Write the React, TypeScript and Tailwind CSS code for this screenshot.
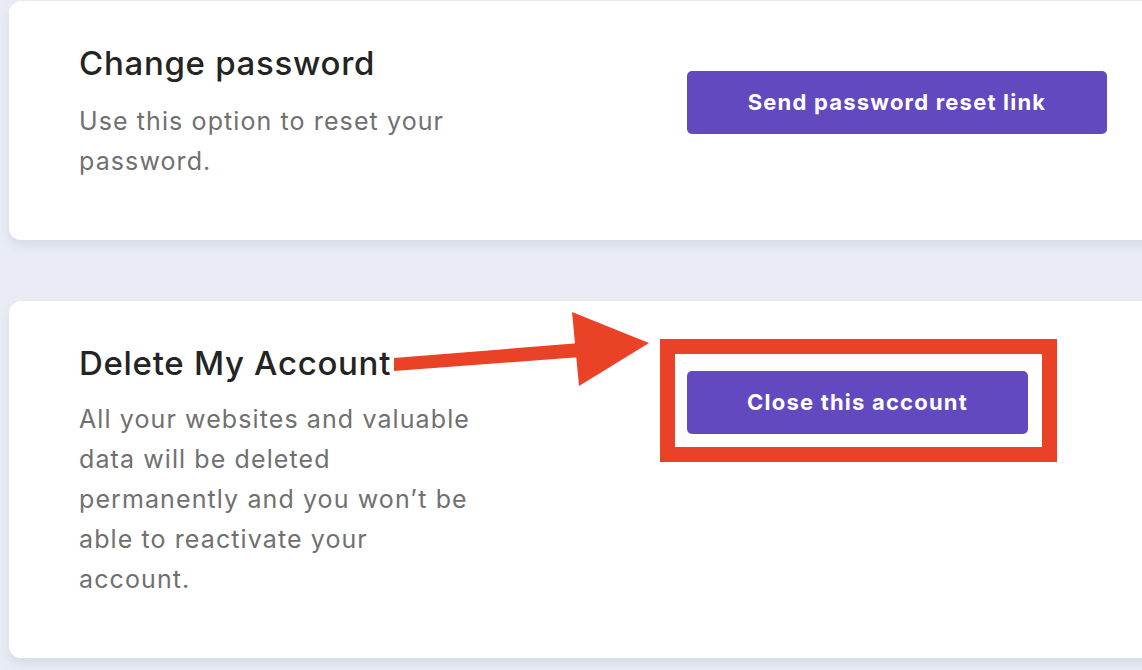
import React from "react";

const font = { fontFamily: "Inter, 'Noto Sans', sans-serif" };

function Arrow() {
  return (
    <svg
      className="absolute left-[371px] top-[4px] pointer-events-none"
      width="280"
      height="90"
      viewBox="0 0 280 90"
    >
      <polygon points="14,53 200,38 201,52 14,66" fill="#e94227" />
      <polygon points="192,7 269,38 199,81" fill="#e94227" />
    </svg>
  );
}

export default function App() {
  return (
    <main
      className="w-[1142px] h-[670px] overflow-hidden bg-[#e9ecf4] pl-[9px] pt-[1px] flex flex-col gap-[61px]"
      style={font}
    >
      {/* Change password */}
      <section className="w-[1160px] bg-white rounded-[12px] shadow-[0_6px_10px_rgba(180,188,205,0.35)] flex pl-[70px] pt-[42px] pb-[59px]">
        <div className="w-[608px]">
          <h2 className="text-[33px] leading-[40px] font-medium text-[#242424] tracking-[0.7px]">Change password</h2>
          <p className="mt-[18px] max-w-[400px] text-[25px] leading-[40px] text-[#707070] tracking-[1.1px]">
            Use this option to reset your password.
          </p>
        </div>
        <div className="pt-[28px]">
          <button className="w-[420px] h-[63px] rounded-[5px] bg-[#6249bf] text-white text-[22px] font-bold tracking-[1.2px]">
            Send password reset link
          </button>
        </div>
      </section>

      {/* Delete account */}
      <section className="relative w-[1160px] bg-white rounded-[12px] shadow-[0_6px_10px_rgba(180,188,205,0.35)] flex pl-[70px] pt-[42px] pb-[59px]">
        <div className="w-[608px]">
          <h2 className="text-[33px] leading-[40px] font-medium text-[#242424] tracking-[0.7px]">Delete My Account</h2>
          <p className="mt-[16px] max-w-[400px] text-[25px] leading-[40px] text-[#707070] tracking-[1.1px]">
            All your websites and valuable data will be deleted permanently and you won’t be able to reactivate your account.
          </p>
        </div>
        <div className="pt-[28px]">
          <div className="relative">
            <button className="w-[341px] h-[63px] rounded-[5px] bg-[#6249bf] text-white text-[22px] font-bold tracking-[1.2px]">
              Close this account
            </button>
            <div className="absolute -left-[27px] -right-[29px] -top-[32px] -bottom-[28px] border-[15px] border-[#e94227]" />
          </div>
        </div>
        <Arrow />
      </section>
    </main>
  );
}
